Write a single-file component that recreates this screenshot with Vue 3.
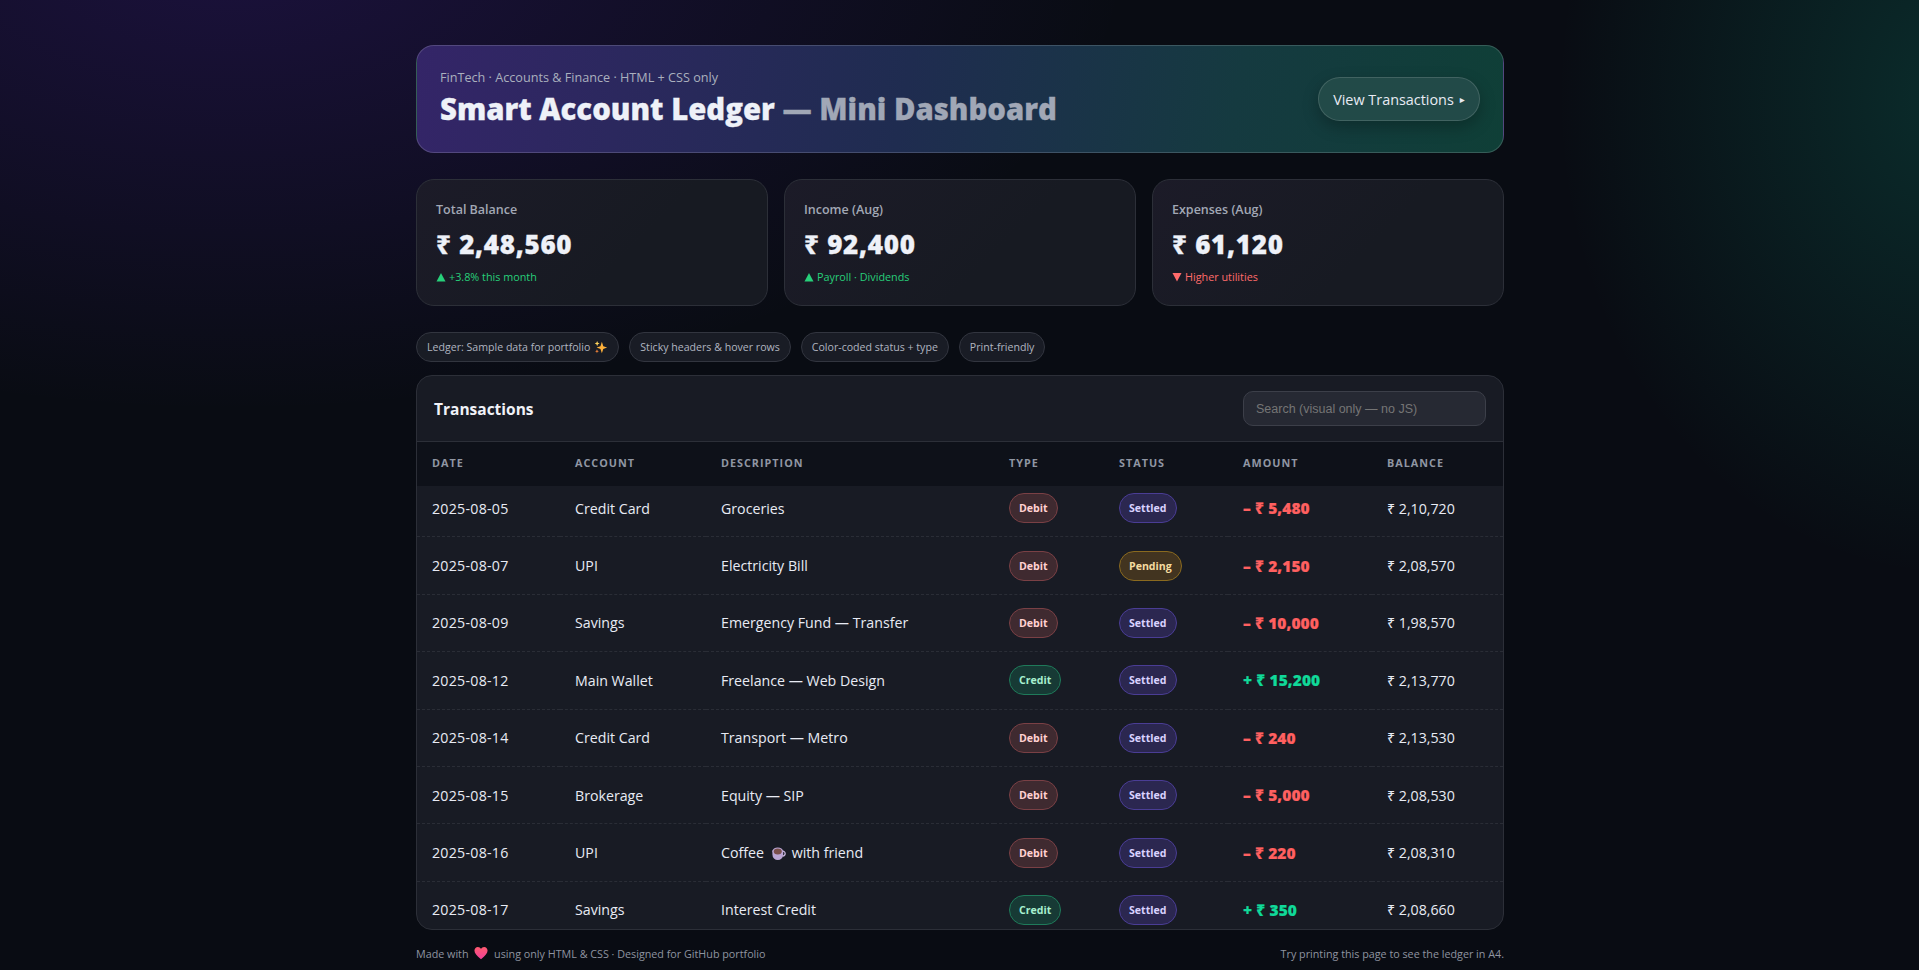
<script setup>
const stats = [
  { label: 'Total Balance', value: '₹ 2,48,560', note: '+3.8% this month', dir: 'up' },
  { label: 'Income (Aug)', value: '₹ 92,400', note: 'Payroll · Dividends', dir: 'up' },
  { label: 'Expenses (Aug)', value: '₹ 61,120', note: 'Higher utilities', dir: 'down' }
]
const rows = [
  { date: '2025-08-05', account: 'Credit Card', desc: 'Groceries', type: 'Debit', status: 'Settled', amount: '– ₹ 5,480', balance: '₹ 2,10,720' },
  { date: '2025-08-07', account: 'UPI', desc: 'Electricity Bill', type: 'Debit', status: 'Pending', amount: '– ₹ 2,150', balance: '₹ 2,08,570' },
  { date: '2025-08-09', account: 'Savings', desc: 'Emergency Fund — Transfer', type: 'Debit', status: 'Settled', amount: '– ₹ 10,000', balance: '₹ 1,98,570' },
  { date: '2025-08-12', account: 'Main Wallet', desc: 'Freelance — Web Design', type: 'Credit', status: 'Settled', amount: '+ ₹ 15,200', balance: '₹ 2,13,770' },
  { date: '2025-08-14', account: 'Credit Card', desc: 'Transport — Metro', type: 'Debit', status: 'Settled', amount: '– ₹ 240', balance: '₹ 2,13,530' },
  { date: '2025-08-15', account: 'Brokerage', desc: 'Equity — SIP', type: 'Debit', status: 'Settled', amount: '– ₹ 5,000', balance: '₹ 2,08,530' },
  { date: '2025-08-16', account: 'UPI', desc: 'Coffee', cup: true, descAfter: 'with friend', type: 'Debit', status: 'Settled', amount: '– ₹ 220', balance: '₹ 2,08,310' },
  { date: '2025-08-17', account: 'Savings', desc: 'Interest Credit', type: 'Credit', status: 'Settled', amount: '+ ₹ 350', balance: '₹ 2,08,660' }
]
const heads = ['Date', 'Account', 'Description', 'Type', 'Status', 'Amount', 'Balance']
</script>

<template>
  <div class="page">
    <header class="hero">
      <div>
        <div class="eyebrow">FinTech · Accounts &amp; Finance · HTML + CSS only</div>
        <h1 class="title">Smart Account Ledger <span class="title-soft">— Mini Dashboard</span></h1>
      </div>
      <a class="cta">View Transactions <span class="cta-arrow">▸</span></a>
    </header>

    <section class="stats">
      <article v-for="s in stats" :key="s.label" class="stat">
        <div class="stat-label">{{ s.label }}</div>
        <div class="stat-value">{{ s.value }}</div>
        <div class="stat-note" :class="s.dir">
          <svg class="tri" viewBox="0 0 10 10" width="10" height="10">
            <path v-if="s.dir === 'up'" d="M5 1 L9.5 9.5 H0.5 Z" />
            <path v-else d="M0.5 1 H9.5 L5 9.5 Z" />
          </svg>
          {{ s.note }}
        </div>
      </article>
    </section>

    <div class="pills">
      <span class="pill">Ledger: Sample data for portfolio
        <svg class="emoji" viewBox="0 0 16 16" width="14" height="14">
          <path d="M9 2 L10.6 7 L15 8.6 L10.6 10.2 L9 15 L7.4 10.2 L3 8.6 L7.4 7 Z" fill="#ffb13b" />
          <path d="M3.6 1 L4.4 3.2 L6.4 4 L4.4 4.8 L3.6 7 L2.8 4.8 L.8 4 L2.8 3.2 Z" fill="#ffd45e" />
          <path d="M3.4 10.6 L4 12.2 L5.6 12.8 L4 13.4 L3.4 15 L2.8 13.4 L1.2 12.8 L2.8 12.2 Z" fill="#ff8a3c" />
        </svg>
      </span>
      <span class="pill">Sticky headers &amp; hover rows</span>
      <span class="pill">Color-coded status + type</span>
      <span class="pill">Print-friendly</span>
    </div>

    <section class="ledger">
      <div class="ledger-top">
        <h2 class="ledger-title">Transactions</h2>
        <input class="search" type="text" placeholder="Search (visual only — no JS)" />
      </div>
      <table class="table">
        <colgroup>
          <col class="c1" /><col class="c2" /><col class="c3" /><col class="c4" /><col class="c5" /><col class="c6" /><col class="c7" />
        </colgroup>
        <thead>
          <tr><th v-for="h in heads" :key="h">{{ h }}</th></tr>
        </thead>
        <tbody>
          <tr v-for="r in rows" :key="r.date">
            <td class="date">{{ r.date }}</td>
            <td>{{ r.account }}</td>
            <td>
              {{ r.desc }}
              <svg v-if="r.cup" class="cup" viewBox="0 0 16 16" width="15" height="15">
                <path d="M12.5 5.5 a2.6 2.6 0 0 1 0 5.2" fill="none" stroke="#c9b6dc" stroke-width="1.4" />
                <path d="M1.5 4.5 H13 V9 a5.7 6 0 0 1 -11.5 0 Z" fill="#bba6d4" />
                <ellipse cx="7.2" cy="5.6" rx="5.6" ry="4" fill="#bba6d4" />
                <ellipse cx="7.2" cy="5.8" rx="4.3" ry="3.2" fill="#7a4f4c" />
              </svg>
              <template v-if="r.descAfter">{{ r.descAfter }}</template>
            </td>
            <td><span class="badge" :class="r.type.toLowerCase()">{{ r.type }}</span></td>
            <td><span class="badge" :class="r.status.toLowerCase()">{{ r.status }}</span></td>
            <td class="amount" :class="r.type === 'Credit' ? 'pos' : 'neg'">{{ r.amount }}</td>
            <td>{{ r.balance }}</td>
          </tr>
        </tbody>
      </table>
    </section>

    <footer class="foot">
      <span>Made with
        <svg class="heart" viewBox="0 0 16 16" width="14" height="14">
          <defs>
            <linearGradient id="hg" x1="0" y1="0" x2="0" y2="1">
              <stop offset="0" stop-color="#ff5a6e" />
              <stop offset="1" stop-color="#f0409a" />
            </linearGradient>
          </defs>
          <path d="M8 15 C3 11 .5 8.4 .5 5.2 C.5 2.6 2.4 1 4.4 1 C6 1 7.2 1.9 8 3.2 C8.8 1.9 10 1 11.6 1 C13.6 1 15.5 2.6 15.5 5.2 C15.5 8.4 13 11 8 15 Z" fill="url(#hg)" />
        </svg>
        using only HTML &amp; CSS · Designed for GitHub portfolio</span>
      <span>Try printing this page to see the ledger in A4.</span>
    </footer>
  </div>
</template>

<style>
html, body {
  margin: 0;
  min-height: 100%;
  background: #090c13;
}
</style>

<style scoped>
.page {
  box-sizing: border-box;
  height: 970px;
  overflow: hidden;
  padding: 45px 415px 0 416px;
  font-family: "Open Sans", "Noto Sans", sans-serif;
  color: #e8ebf4;
  background:
    radial-gradient(900px 460px at 12% -5%, rgba(105, 40, 237, 0.19), transparent 100%),
    radial-gradient(400px 480px at 102% 10%, rgba(16, 185, 150, 0.19), transparent 100%),
    #090c13;
}
.hero {
  box-sizing: border-box;
  height: 108px;
  display: flex;
  align-items: center;
  justify-content: space-between;
  padding: 0 23px;
  border-radius: 18px;
  border: 1px solid rgba(255, 255, 255, 0.16);
  background: linear-gradient(100deg, #342568 0%, #1f2c50 45%, #153a40 75%, #0f3f37 100%);
}
.eyebrow {
  font-size: 12.65px;
  line-height: 17px;
  color: #aab0be;
  margin-bottom: 5px;
  margin-top: -3px;
}
.title {
  margin: 0;
  font-size: 29.3px;
  line-height: 36px;
  font-weight: 800;
  color: #eef1f8;
  -webkit-text-stroke: 0.3px currentColor;
}
.title-soft {
  color: #a0a7b6;
}
.cta {
  box-sizing: border-box;
  height: 44px;
  width: 162px;
  display: flex;
  align-items: center;
  justify-content: center;
  gap: 6px;
  border-radius: 999px;
  font-size: 14.4px;
  color: #e8ebf4;
  background: #224a48;
  border: 1px solid rgba(255, 255, 255, 0.14);
  box-shadow: 0 6px 16px rgba(0, 0, 0, 0.25);
}
.cta-arrow {
  font-family: "DejaVu Sans", sans-serif;
  font-size: 10px;
}
.stats {
  margin-top: 26px;
  display: grid;
  grid-template-columns: repeat(3, 1fr);
  gap: 16px;
}
.stat {
  box-sizing: border-box;
  height: 127px;
  padding: 21px 19px 0;
  border-radius: 18px;
  border: 1px solid #2c2f38;
  background: linear-gradient(135deg, #1c1b28, #171a22 60%);
}
.stat-label {
  font-size: 12.5px;
  line-height: 18px;
  font-weight: 600;
  color: #a2a8b5;
}
.stat-value {
  margin-top: 9px;
  font-size: 26px;
  line-height: 32px;
  font-weight: 800;
  letter-spacing: 0.7px;
  color: #eef1f8;
  -webkit-text-stroke: 0.3px currentColor;
}
.stat-note {
  margin-top: 9px;
  font-size: 10.8px;
  line-height: 16px;
  display: flex;
  align-items: center;
  gap: 3px;
}
.stat-note.up { color: #27d07a; }
.stat-note.down { color: #ff6b6b; }
.tri path { fill: currentColor; }
.pills {
  margin-top: 26px;
  display: flex;
  gap: 10px;
}
.pill {
  box-sizing: border-box;
  height: 30px;
  display: inline-flex;
  align-items: center;
  gap: 4px;
  padding: 0 10px;
  font-size: 10.6px;
  color: #b0b5c0;
  background: #191c25;
  border: 1px solid #32353f;
  border-radius: 999px;
}
.ledger {
  box-sizing: border-box;
  margin-top: 13px;
  height: 555px;
  overflow: hidden;
  border: 1px solid #2c2f38;
  border-radius: 16px;
  background: #181b24;
}
.ledger-top {
  box-sizing: border-box;
  height: 66px;
  display: flex;
  align-items: center;
  justify-content: space-between;
  padding: 0 17px;
  border-bottom: 1px solid #2c2f38;
}
.ledger-title {
  margin: 0;
  font-size: 15.5px;
  font-weight: 700;
  color: #f0f2f8;
}
.search {
  box-sizing: border-box;
  width: 243px;
  height: 35px;
  padding: 0 12px;
  border-radius: 10px;
  border: 1px solid #3c3f49;
  background: #262933;
  font-family: "Liberation Sans", sans-serif;
  font-size: 12.5px;
  color: #e8ebf4;
  outline: none;
}
.search::placeholder { color: #757575; }
.table {
  width: 100%;
  table-layout: fixed;
  border-collapse: separate;
  border-spacing: 0;
}
.c1 { width: 143px; }
.c2 { width: 146px; }
.c3 { width: 288px; }
.c4 { width: 110px; }
.c5 { width: 124px; }
.c6 { width: 144px; }
th {
  box-sizing: border-box;
  height: 44px;
  padding: 0 0 4px 15px;
  background: #0e1119;
  text-align: left;
  font-size: 10.8px;
  font-weight: 700;
  letter-spacing: 1px;
  text-transform: uppercase;
  color: #9096a3;
}
td {
  box-sizing: border-box;
  height: 57.4px;
  padding: 0 0 0 15px;
  font-size: 14.2px;
  color: #e8ebf4;
  border-bottom: 1px dashed #2a2d36;
  white-space: nowrap;
}
tbody tr:first-child td {
  height: 51.4px;
  padding-bottom: 6px;
}
.date { letter-spacing: 0.25px; }
.amount {
  font-weight: 800;
  font-size: 15.5px;
  letter-spacing: 0.1px;
  -webkit-text-stroke: 0.2px currentColor;
}
.neg { color: #ff6060; }
.pos { color: #10d999; }
.badge {
  box-sizing: border-box;
  display: inline-flex;
  align-items: center;
  height: 30px;
  padding: 0 9px;
  border-radius: 999px;
  border: 1px solid;
  font-size: 10.6px;
  font-weight: 700;
  vertical-align: middle;
}
.debit { background: #3f2a30; border-color: #7a4045; color: #ffd0d0; }
.credit { background: #173a35; border-color: #1f7a5a; color: #a7f0d0; }
.settled { background: #2b2750; border-color: #4a3d95; color: #d9d2ff; }
.pending { background: #423420; border-color: #8a6a1f; color: #f5dca0; }
.cup { vertical-align: -3px; margin: 0 6px 0 3px; }
.emoji { flex: none; }
.heart { vertical-align: -2px; margin: 0 3px; }
.foot {
  margin-top: 15px;
  display: flex;
  justify-content: space-between;
  font-size: 10.75px;
  line-height: 18px;
  color: #8f94a0;
}
</style>
